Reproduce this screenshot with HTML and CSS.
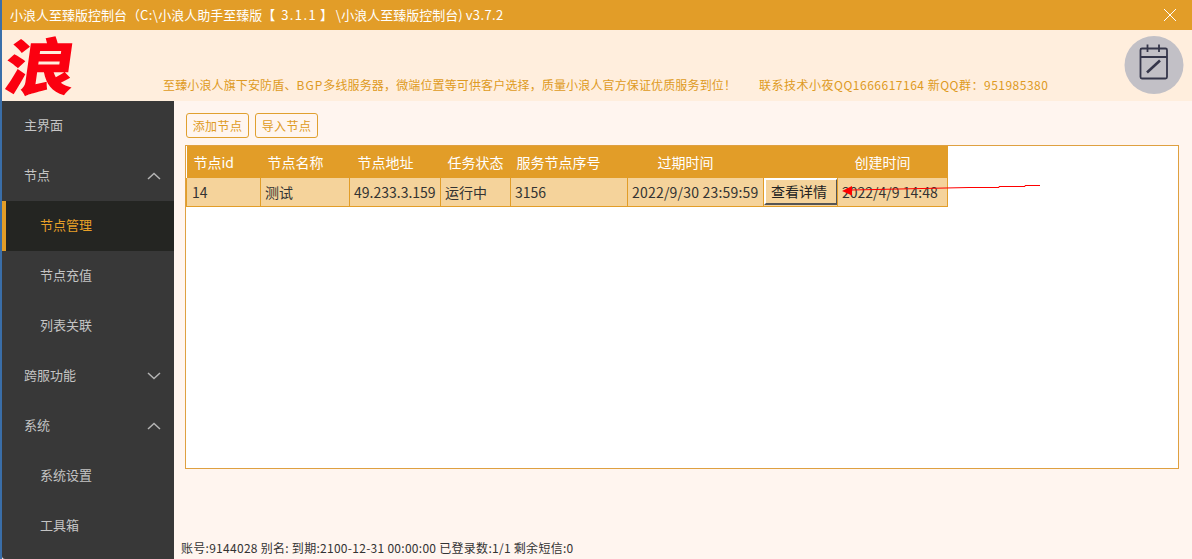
FILE: index.html
```html
<!DOCTYPE html>
<html lang="zh-CN">
<head>
<meta charset="utf-8">
<title>小浪人至臻版控制台</title>
<link rel="stylesheet" href="styles.css">
</head>
<body>
<div class="app">
  <div class="titlebar">
    <span class="title">小浪人至臻版控制台（<span class="lat">C:\</span>小浪人助手至臻版【 <span class="lat wide">3.1.1</span> 】 <span class="lat">\</span>小浪人至臻版控制台) <span class="lat">v3.7.2</span></span>
    <svg class="close" width="14" height="14" viewBox="0 0 14 14"><path d="M1 1L13 13M13 1L1 13" stroke="#fff" stroke-width="1" fill="none"/></svg>
  </div>
  <header class="banner">
    <div class="logo">浪</div>
    <div class="notice">
      <span class="notice-main">至臻小浪人旗下安防盾、<span class="spaced">BGP</span>多线服务器，微端位置等可供客户选择，质量小浪人官方保证优质服务到位！</span>
      <span class="notice-contact">联系技术小夜QQ1666617164 新QQ群：951985380</span>
    </div>
    <svg class="avatar" width="60" height="60" viewBox="0 0 60 60">
      <ellipse cx="30" cy="30" rx="29.500" ry="29" fill="#c2c0c6"/>
      <path d="M18 13.500h23.500a1.500 1.500 0 0 1 1.500 1.500v27a1.500 1.500 0 0 1-1.500 1.500H18a1.500 1.500 0 0 1-1.500-1.500V15a1.500 1.500 0 0 1 1.500-1.500zM16.500 22h26.500M23.500 9.500v7.500M35 9.500v7.500" fill="none" stroke="#35364a" stroke-width="1.800"/>
      <path d="M23 37.500L36 25.500" fill="none" stroke="#35364a" stroke-width="2.600"/>
    </svg>
  </header>
  <div class="body">
    <nav class="sidebar">
      <a class="nav-item"><span class="label">主界面</span></a>
      <a class="nav-item"><span class="label">节点</span><svg class="chev" width="14" height="8" viewBox="0 0 14 8"><path d="M1 7L7 1.500L13 7" fill="none" stroke="#b4b4b4" stroke-width="1.500"/></svg></a>
      <a class="nav-item sub active"><span class="label">节点管理</span></a>
      <a class="nav-item sub"><span class="label">节点充值</span></a>
      <a class="nav-item sub"><span class="label">列表关联</span></a>
      <a class="nav-item"><span class="label">跨服功能</span><svg class="chev" width="14" height="8" viewBox="0 0 14 8"><path d="M1 1L7 6.500L13 1" fill="none" stroke="#b4b4b4" stroke-width="1.500"/></svg></a>
      <a class="nav-item"><span class="label">系统</span><svg class="chev" width="14" height="8" viewBox="0 0 14 8"><path d="M1 7L7 1.500L13 7" fill="none" stroke="#b4b4b4" stroke-width="1.500"/></svg></a>
      <a class="nav-item sub"><span class="label">系统设置</span></a>
      <a class="nav-item sub"><span class="label">工具箱</span></a>
    </nav>
    <main class="content">
      <div class="toolbar">
        <button class="tool-btn">添加节点</button>
        <button class="tool-btn">导入节点</button>
      </div>
      <div class="panel">
        <table class="grid">
          <colgroup>
            <col class="c1"><col class="c2"><col class="c3"><col class="c4"><col class="c5"><col class="c6"><col class="c7"><col class="c8">
          </colgroup>
          <thead>
            <tr>
              <th class="h1">节点id</th>
              <th class="h2">节点名称</th>
              <th class="h3">节点地址</th>
              <th class="h4">任务状态</th>
              <th class="h5">服务节点序号</th>
              <th class="h6">过期时间</th>
              <th></th>
              <th class="h8">创建时间</th>
            </tr>
          </thead>
          <tbody>
            <tr>
              <td class="first">14</td>
              <td>测试</td>
              <td>49.233.3.159</td>
              <td>运行中</td>
              <td>3156</td>
              <td class="num">2022/9/30 23:59:59</td>
              <td class="btn-cell"><button class="detail-btn">查看详情</button></td>
              <td>2022/4/9 14:48</td>
            </tr>
          </tbody>
        </table>
        <svg class="arrow" width="200" height="16" viewBox="0 0 200 16">
          <path d="M0 10L10 5V14.500z" fill="#ff0000"/>
          <path d="M10 9L127 6.500H157V5.500H183V4.500H198" fill="none" stroke="#f00" stroke-width="1"/>
        </svg>
      </div>
      <div class="status">账号:9144028 别名: 到期:2100-12-31 00:00:00 已登录数:1/1 剩余短信:0</div>
    </main>
  </div>
</div>
</body>
</html>
```
FILE: styles.css
```css
* { box-sizing: border-box; }
html, body { margin: 0; padding: 0; height: 100%; overflow: hidden; }
body { font-family: "Noto Sans CJK SC", "Liberation Sans", sans-serif; }

.app {
  height: 559px;
  display: flex;
  flex-direction: column;
  border-left: 2px solid #3a6ea8;
  background: #fff5ef;
}

.titlebar {
  height: 30px;
  flex: none;
  background: #e29d28;
  color: #fff;
  display: flex;
  align-items: center;
  justify-content: space-between;
  padding: 0 15px 0 8px;
  font-size: 13px;
}
.title { line-height: 30px; white-space: nowrap; }
.lat { letter-spacing: 0.4px; }
.lat.wide { letter-spacing: 1.400px; margin-left: 3px; }

.banner {
  height: 71px;
  flex: none;
  background: #ffeedd;
  display: flex;
  align-items: flex-start;
  position: relative;
}
.logo {
  width: 72px;
  height: 71px;
  color: #fb0010;
  font-size: 62px;
  font-weight: 900;
  line-height: 66px;
  text-align: left;
  padding-left: 3px;
  transform: skewX(-8deg) scaleX(1.140);
  transform-origin: left center;
  flex: none;
}
.notice {
  margin: 46px 0 0 89px;
  display: flex;
  gap: 23px;
  color: #de9a22;
  font-size: 12px;
  line-height: 17px;
  white-space: nowrap;
}
.notice-main { letter-spacing: 0.140px; }
.spaced { letter-spacing: 1px; }
.notice-contact { letter-spacing: 0.500px; }
.avatar { position: absolute; right: 8px; top: 5px; }

.body { flex: 1; display: flex; min-height: 0; }

.sidebar {
  width: 172px;
  flex: none;
  background: #383838;
  display: flex;
  flex-direction: column;
  border-bottom-left-radius: 3px;
}
.nav-item {
  height: 50px;
  flex: none;
  display: flex;
  align-items: center;
  justify-content: space-between;
  padding: 0 13px 0 22px;
  color: #c4c4c4;
  font-size: 13px;
}
.label { margin-bottom: 4px; }
.nav-item.sub { padding-left: 38px; }
.nav-item.active {
  background: #242522;
  color: #e8a028;
  border-left: 4px solid #e29d28;
  padding-left: 34px;
}

.content {
  flex: 1;
  min-width: 0;
  display: flex;
  flex-direction: column;
  padding: 12px 13px 0 11px;
}
.toolbar { display: flex; gap: 6px; height: 32px; flex: none; padding-left: 1px; }
.tool-btn {
  width: 63px;
  height: 25px;
  padding: 0;
  background: #fff5ef;
  border: 1px solid #e0a030;
  border-radius: 3px;
  color: #de9a22;
  letter-spacing: 0.400px;
  font: 12px/22px "Noto Sans CJK SC", sans-serif;
}

.panel {
  height: 324px;
  flex: none;
  background: #fff;
  border: 1px solid #dfa040;
  position: relative;
}

.grid {
  table-layout: fixed;
  width: 761px;
  border-collapse: collapse;
  font-size: 14px;
}
.c1 { width: 74px; }
.c2 { width: 89px; }
.c3 { width: 91px; }
.c4 { width: 70px; }
.c5 { width: 117px; }
.c6 { width: 136px; }
.c7 { width: 74px; }
.c8 { width: 110px; }

.grid th {
  height: 32px;
  padding: 0;
  background: #e29d28;
  color: #fff;
  font-weight: 400;
  text-align: left;
  white-space: nowrap;
}
.grid th.h1 { padding-left: 7px; }
.grid th.h2 { padding-left: 7px; }
.grid th.h3 { padding-left: 8px; }
.grid th.h4 { padding-left: 7px; }
.grid th.h5 { padding-left: 6px; }
.grid th.h6 { padding-left: 30px; }
.grid th.h8 { padding-left: 17px; }

.grid td {
  height: 28px;
  padding: 0 0 0 4px;
  background: #f5d39b;
  border: 1px solid #e29d28;
  border-top: 0;
  color: #333;
  white-space: nowrap;
  overflow: hidden;
}
.grid td.first { padding-left: 5px; }
.grid td.num { letter-spacing: 0.200px; }
.grid td.btn-cell { padding: 0; overflow: visible; }

.detail-btn {
  display: block;
  width: 74px;
  height: 27px;
  margin: 0;
  padding: 0 4px 2px 0;
  background: #f5d39b;
  border: 2px solid;
  border-color: #fff #555 #555 #fff;
  color: #222;
  font: 14px/22px "Noto Sans CJK SC", sans-serif;
}

.arrow { position: absolute; left: 656px; top: 35px; }

.status {
  margin-top: 70px;
  margin-left: -4px;
  color: #333;
  font-size: 12px;
  letter-spacing: 0.280px;
  line-height: 17px;
  white-space: nowrap;
}
```
